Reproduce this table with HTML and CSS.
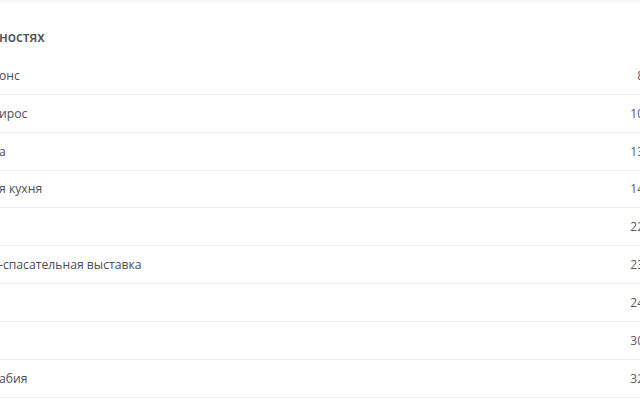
FILE: index.html
```html
<!DOCTYPE html>
<html lang="ru">
<head>
<meta charset="utf-8">
<link rel="stylesheet" href="styles.css">
</head>
<body>
<div class="topbar"></div>
<section class="panel">
  <h2 class="title">ностях</h2>
  <ul class="list">
    <li class="row"><span class="name">онс</span><span class="num">8</span></li>
    <li class="row"><span class="name">ирос</span><span class="num">10</span></li>
    <li class="row"><span class="name">а</span><span class="num">13</span></li>
    <li class="row"><span class="name">я кухня</span><span class="num">14</span></li>
    <li class="row"><span class="name"></span><span class="num">22</span></li>
    <li class="row"><span class="name">-спасательная выставка</span><span class="num">23</span></li>
    <li class="row"><span class="name"></span><span class="num">24</span></li>
    <li class="row"><span class="name"></span><span class="num">30</span></li>
    <li class="row"><span class="name">абия</span><span class="num">32</span></li>
  </ul>
</section>
</body>
</html>
```
FILE: styles.css
```css
html, body {
  margin: 0;
  padding: 0;
  background: #fff;
  overflow: hidden;
  width: 640px;
  height: 400px;
}
body {
  font-family: "Open Sans", "Liberation Sans", sans-serif;
  color: #4d4d52;
}
.topbar {
  height: 3px;
  background: #f7f7f7;
}
.panel {
  width: 645px;
  margin-left: -1px;
}
.title {
  margin: 0;
  padding: 24px 0 0 0;
  height: 30px;
  font-size: 13.5px;
  font-weight: 600;
  line-height: 20px;
  color: #505056;
}
.list {
  list-style: none;
  margin: 0;
  padding: 0;
}
.row {
  display: flex;
  justify-content: space-between;
  align-items: center;
  height: 36.85px;
  border-bottom: 1px solid #eeeeee;
  font-size: 12.2px;
}
.name {
  color: #4d4d52;
}
.num {
  font-size: 12px;
  color: #5a5a60;
}
```
